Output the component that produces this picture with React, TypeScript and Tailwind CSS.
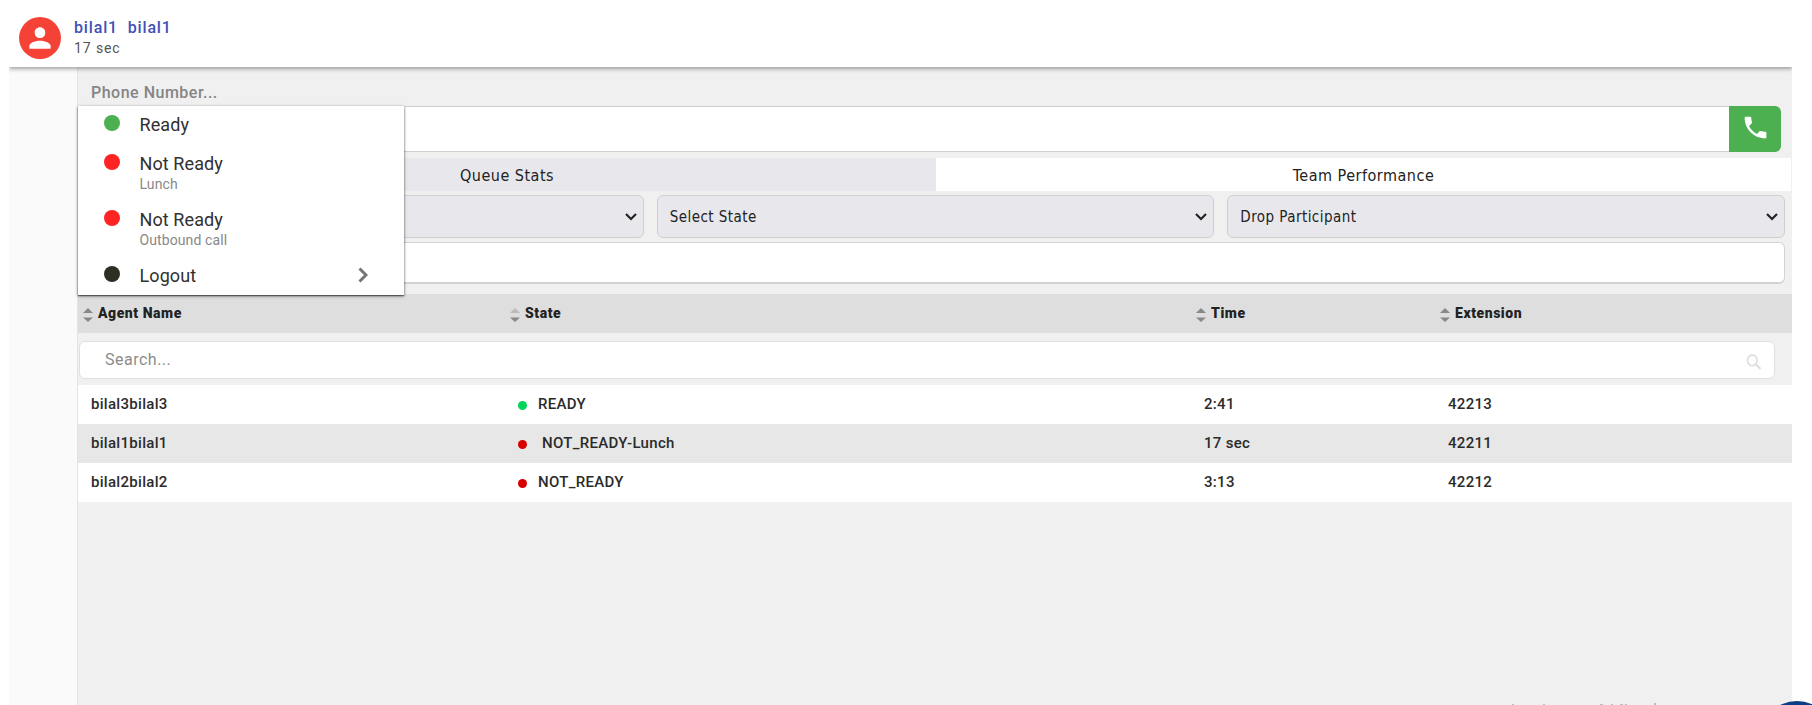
import clsx from 'clsx';

const states = [
  { label: 'Ready', dot: 'bg-[#4caf50]', row: 'h-[39px]' },
  { label: 'Not Ready', reason: 'Lunch', dot: 'bg-[#ff2424]', row: 'h-[56px]' },
  { label: 'Not Ready', reason: 'Outbound call', dot: 'bg-[#ff2424]', row: 'h-[56px]' },
  { label: 'Logout', dot: 'bg-[#2c3023]', row: 'h-[36px]', submenu: true },
];

const columns = [
  { title: 'Agent Name', width: 'w-[427px]' },
  { title: 'State', width: 'w-[686px]', sorted: true },
  { title: 'Time', width: 'w-[244px]' },
  { title: 'Extension', width: 'flex-1' },
];

const agents = [
  { name: 'bilal3bilal3', state: 'READY', time: '2:41', ext: '42213', dot: 'bg-[#00d65c]' },
  { name: 'bilal1bilal1', state: 'NOT_READY-Lunch', time: '17 sec', ext: '42211', dot: 'bg-[#d90000]', indent: true },
  { name: 'bilal2bilal2', state: 'NOT_READY', time: '3:13', ext: '42212', dot: 'bg-[#d90000]' },
];

function SortIcon({ sorted }: { sorted?: boolean }) {
  return (
    <svg className="mt-[2px] mr-[5px] h-[14px] w-[10px]" viewBox="0 0 10 14" fill="#888">
      <path d="M0 5 5 0l5 5z" opacity={sorted ? 0.4 : 1} />
      <path d="M0 9.5h10l-5 4.5z" />
    </svg>
  );
}

function Select({ label }: { label?: string }) {
  return (
    <div className="flex h-[43px] flex-1 items-center justify-between rounded-md border border-[#cfcfcf] bg-[#e8e8ec] pr-[6px] pl-3">
      <span className="pt-[2px]">{label}</span>
      <svg className="h-[8px] w-[12px]" viewBox="0 0 12 8" fill="none" stroke="#222" strokeWidth="2.2">
        <path d="M1 1l5 5 5-5" />
      </svg>
    </div>
  );
}

function StateMenu() {
  return (
    <div className="absolute top-[39px] left-0 h-[189px] w-[326px] bg-white pl-[26px] shadow-[0_1px_3px_rgba(0,0,0,0.55),0_1px_1px_rgba(0,0,0,0.4)]">
      {states.map((s, i) => (
        <div key={i} className={clsx('flex', s.row)}>
          <span className={clsx('mt-[9px] size-4 rounded-full', s.dot)} />
          <div className="ml-[19.5px] w-[218.5px] pt-[6px]">
            <div className="text-[18px] leading-[25px] tracking-[0.1px] text-[#303030]">{s.label}</div>
            {s.reason && <div className="text-[14px] leading-[17px] tracking-[0.1px] text-[#888]">{s.reason}</div>}
          </div>
          {s.submenu && (
            <svg className="mt-[10px] h-4 w-[10px]" viewBox="0 0 10 16" fill="none" stroke="#757575" strokeWidth="3">
              <path d="M1.5 1.5l6.5 6.5-6.5 6.5" />
            </svg>
          )}
        </div>
      ))}
    </div>
  );
}

export default function App() {
  return (
    <div className="relative flex h-[705px] w-[1812px] flex-col overflow-hidden bg-white font-[Roboto,sans-serif]">
      <header className="relative z-10 mr-5 ml-[9px] flex h-[67px] shrink-0 bg-white pt-[17px] pl-[10px] shadow-[0_2px_4px_rgba(0,0,0,0.35)] [clip-path:inset(0_0_-8px_0)]">
        <div className="flex size-[42px] items-center justify-center rounded-full bg-[#f44336]">
          <svg className="size-8" viewBox="0 0 24 24" fill="white">
            <path d="M12 12c2.21 0 4-1.79 4-4s-1.79-4-4-4-4 1.79-4 4 1.79 4 4 4zm0 2c-2.67 0-8 1.34-8 4v2h16v-2c0-2.66-5.33-4-8-4z" />
          </svg>
        </div>
        <div className="mt-px ml-[13px]">
          <div className="text-[16px] leading-[20px] font-medium tracking-[0.85px] whitespace-pre text-[#3f51b5]">bilal1  bilal1</div>
          <div className="text-[14px] leading-[21px] tracking-[0.9px] text-[#555]">17 sec</div>
        </div>
      </header>

      <div className="mr-5 ml-[9px] flex flex-1">
        <aside className="w-[69px] border-r border-[#e4e4e4] bg-[#fafafa]" />
        <main className="relative flex-1 bg-[#f0f0f0]">
          <div className="h-[39px] pt-[14px] pl-[13px] text-[16px] leading-[24px] font-medium tracking-[0.5px] text-[#858585]">
            Phone Number...
          </div>
          <div className="mr-[11px] flex h-[46px]">
            <div className="flex-1 border-y border-[#cfcfcf] bg-white" />
            <button className="flex w-[52px] items-center justify-center rounded-r-md bg-[#4caf50] pb-[3px]">
              <svg className="size-[29px]" viewBox="0 0 24 24" fill="white">
                <path d="M6.62 10.79c1.44 2.83 3.76 5.14 6.59 6.59l2.2-2.2c.27-.27.67-.36 1.02-.24 1.12.37 2.33.57 3.57.57.55 0 1 .45 1 1V20c0 .55-.45 1-1 1-9.39 0-17-7.61-17-17 0-.55.45-1 1-1h3.5c.55 0 1 .45 1 1 0 1.25.2 2.45.57 3.57.11.35.03.74-.25 1.02l-2.2 2.2z" />
              </svg>
            </button>
          </div>

          <div className="mt-[6px] mr-px flex h-[33px] font-['DejaVu_Sans_Condensed','Noto_Sans',sans-serif] text-[16px] leading-[36px] tracking-[0.5px] text-[#222]">
            <div className="w-[858px] bg-[#e8e8ec] text-center">Queue Stats</div>
            <div className="flex-1 bg-white text-center">Team Performance</div>
          </div>
          <div className="mt-1 mr-[7px] ml-2 flex gap-[13px] font-['DejaVu_Sans_Condensed','Noto_Sans',sans-serif] text-[15px] tracking-[0.45px] text-[#222]">
            <Select />
            <Select label="Select State" />
            <Select label="Drop Participant" />
          </div>
          <div className="mt-1 mr-[7px] ml-2 h-[42px] rounded-md border border-b-2 border-[#d3d3d3] bg-white" />

          <div className="mt-[10px] flex h-[39px] items-center bg-[#dedede] pl-[5px] text-[14px] font-black tracking-[0.55px] text-[#222]">
            {columns.map((c) => (
              <div key={c.title} className={clsx('flex items-center', c.width)}>
                <SortIcon sorted={c.sorted} />
                {c.title}
              </div>
            ))}
          </div>
          <div className="mt-2 mr-[17px] ml-px flex h-[38px] items-center justify-between rounded-md border border-[#e0e0e0] bg-white pr-3 pl-[25px] text-[16px] tracking-[0.5px] text-[#8c8c8c]">
            Search...
            <svg className="mt-[3px] size-4" viewBox="0 0 16 16" fill="none" stroke="#e0e0e0" strokeWidth="1.8">
              <ellipse cx="6.3" cy="6.3" rx="4.8" ry="5.3" />
              <path d="M9.8 10l4.7 5" strokeWidth="2.2" />
            </svg>
          </div>
          <div className="mt-[6px] text-[15px] font-medium tracking-[0.3px] text-[#2b2b2b]">
            {agents.map((a) => (
              <div key={a.name} className="flex h-[39px] items-center bg-white pl-[13px] even:bg-[#e7e7e7]">
                <span className="w-[427px]">{a.name}</span>
                <span className="flex w-[686px] items-center">
                  <span className={clsx('mt-px size-[9px] rounded-full', a.dot)} />
                  <span className={a.indent ? 'ml-[15px]' : 'ml-[11px]'}>{a.state}</span>
                </span>
                <span className="w-[244px]">{a.time}</span>
                <span>{a.ext}</span>
              </div>
            ))}
          </div>
          <StateMenu />
        </main>
      </div>

      {/* footer line and chat bubble run off the bottom edge */}
      <svg className="absolute bottom-0 left-[1512px] h-[2px] w-[146px]" viewBox="0 0 146 2" fill="#bdbdbd">
        <path d="M0 1h2v1H0zM31 1h2v1h-2zM88 1h3v1h-3zM99 1h2v1h-2zM108 1h3v1h-3zM113 1h2v1h-2zM142 0h2v2h-2z" />
      </svg>
      <div className="absolute top-[701px] left-[1759px] size-[76px] rounded-full bg-[#0a3f87]" />
    </div>
  );
}
